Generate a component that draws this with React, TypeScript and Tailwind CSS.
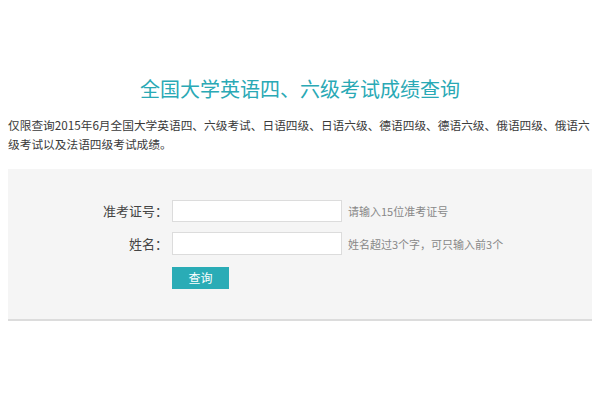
import { useState } from "react";

const font = {
  fontFamily: '"Noto Sans CJK SC", "Liberation Sans", sans-serif',
};

export default function App() {
  const [ticket, setTicket] = useState("");
  const [name, setName] = useState("");

  return (
    <div className="w-[600px] h-[400px] bg-white text-[#333]" style={font}>
      <div className="px-2 pt-[75px]">
        <h1 className="text-center text-[20px] leading-[28px] text-[#2aa9b5] font-normal">
          全国大学英语四、六级考试成绩查询
        </h1>
        <p className="mt-3 -mr-1 text-[11.7px] leading-[19px] text-[#3a3a3a]">
          仅限查询2015年6月全国大学英语四、六级考试、日语四级、日语六级、德语四级、德语六级、俄语四级、俄语六级考试以及法语四级考试成绩。
        </p>

        <div className="mt-[16px] bg-[#f5f5f5] border-b-2 border-[#dcdcdc] pt-[31px] pb-[30px]">
          <div className="flex flex-col gap-[10px]">
            <div className="flex items-center h-[22px]">
              <label className="w-[164px] pr-[4px] text-right text-[13px] leading-[22px] text-[#444]">
                准考证号：
              </label>
              <input
                value={ticket}
                onChange={(e) => setTicket(e.target.value)}
                className="w-[170px] h-[22px] bg-white border border-[#dcdcdc] outline-none px-1 text-[12px]"
              />
              <span className="ml-[6px] text-[11px] leading-[22px] text-[#888]">
                请输入15位准考证号
              </span>
            </div>
            <div className="flex items-center h-[23px]">
              <label className="w-[164px] pr-[4px] text-right text-[13px] leading-[22px] text-[#444]">
                姓名：
              </label>
              <input
                value={name}
                onChange={(e) => setName(e.target.value)}
                className="w-[170px] h-[23px] bg-white border border-[#dcdcdc] outline-none px-1 text-[12px]"
              />
              <span className="ml-[6px] text-[11px] leading-[22px] text-[#888]">
                姓名超过3个字，可只输入前3个
              </span>
            </div>
          </div>
          <div className="pl-[164px] mt-[12px] flex">
            <button className="w-[57px] h-[22px] bg-[#2aacb6] text-white text-[12px] leading-[22px]">
              查询
            </button>
          </div>
        </div>
      </div>
    </div>
  );
}
